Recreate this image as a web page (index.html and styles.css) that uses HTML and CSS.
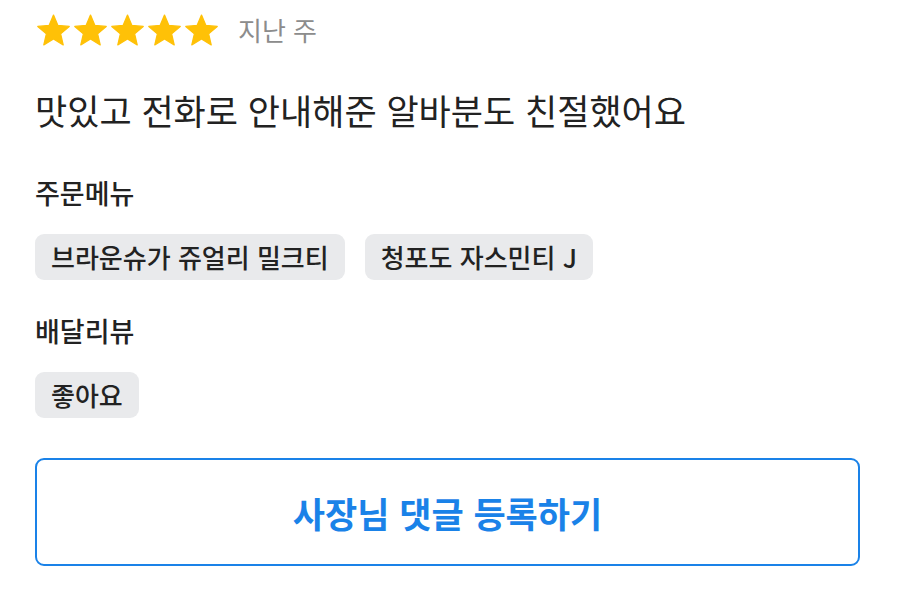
FILE: index.html
```html
<!DOCTYPE html>
<html lang="ko">
<head>
<meta charset="utf-8">
<link rel="stylesheet" href="styles.css">
</head>
<body>
<div class="review">
  <div class="rating">
    <div class="stars">
      <svg class="star" viewBox="1.5 1.5 21 20"><path d="M12 17.27L18.18 21l-1.64-7.03L22 9.24l-7.19-.61L12 2 9.19 8.63 2 9.24l5.46 4.73L5.82 21z"/></svg>
      <svg class="star" viewBox="1.5 1.5 21 20"><path d="M12 17.27L18.18 21l-1.64-7.03L22 9.24l-7.19-.61L12 2 9.19 8.63 2 9.24l5.46 4.73L5.82 21z"/></svg>
      <svg class="star" viewBox="1.5 1.5 21 20"><path d="M12 17.27L18.18 21l-1.64-7.03L22 9.24l-7.19-.61L12 2 9.19 8.63 2 9.24l5.46 4.73L5.82 21z"/></svg>
      <svg class="star" viewBox="1.5 1.5 21 20"><path d="M12 17.27L18.18 21l-1.64-7.03L22 9.24l-7.19-.61L12 2 9.19 8.63 2 9.24l5.46 4.73L5.82 21z"/></svg>
      <svg class="star" viewBox="1.5 1.5 21 20"><path d="M12 17.27L18.18 21l-1.64-7.03L22 9.24l-7.19-.61L12 2 9.19 8.63 2 9.24l5.46 4.73L5.82 21z"/></svg>
    </div>
    <span class="date">지난 주</span>
  </div>
  <p class="comment">맛있고 전화로 안내해준 알바분도 친절했어요</p>
  <h3 class="label">주문메뉴</h3>
  <div class="chips">
    <span class="chip">브라운슈가 쥬얼리 밀크티</span>
    <span class="chip">청포도 자스민티 J</span>
  </div>
  <h3 class="label">배달리뷰</h3>
  <div class="chips">
    <span class="chip">좋아요</span>
  </div>
  <button class="reply">사장님 댓글 등록하기</button>
</div>
</body>
</html>
```

FILE: styles.css
```css
html, body {
  margin: 0;
  padding: 0;
  background: #ffffff;
}
body {
  font-family: "Noto Sans CJK KR", "Noto Sans", sans-serif;
  color: #222222;
}
.review {
  padding: 14px 37px 0 35px;
  display: flex;
  flex-direction: column;
}
.rating {
  display: flex;
  align-items: center;
  height: 32px;
  padding-left: 2px;
}
.stars {
  display: flex;
  gap: 4px;
}
.star {
  width: 33px;
  height: 32px;
  fill: #FFC107;
  stroke: #FFC107;
  stroke-width: 0.8;
  stroke-linejoin: round;
}
.date {
  margin-left: 20px;
  font-size: 26px;
  line-height: 32px;
  color: #8c8c8c;
}
.comment {
  margin: 42px 0 0 0;
  font-size: 35px;
  line-height: 44px;
  color: #222222;
}
.label {
  margin: 46px 0 0 0;
  font-size: 27px;
  line-height: 30px;
  font-weight: 500;
  color: #222222;
}
.chips {
  display: flex;
  gap: 20px;
  margin-top: 26px;
}
.chip {
  background: #e9eaec;
  border-radius: 9px;
  padding: 0 16px;
  height: 46px;
  line-height: 46px;
  font-size: 26px;
  font-weight: 500;
  color: #222222;
}
.chips + .label {
  margin-top: 36px;
}
.chips:nth-of-type(4) {
  margin-top: 25px;
}
.reply {
  margin-top: 40px;
  height: 108px;
  border: 2px solid #1a82e8;
  border-radius: 9px;
  background: #ffffff;
  color: #1a82e8;
  font-family: inherit;
  font-size: 35px;
  font-weight: 700;
}
```
